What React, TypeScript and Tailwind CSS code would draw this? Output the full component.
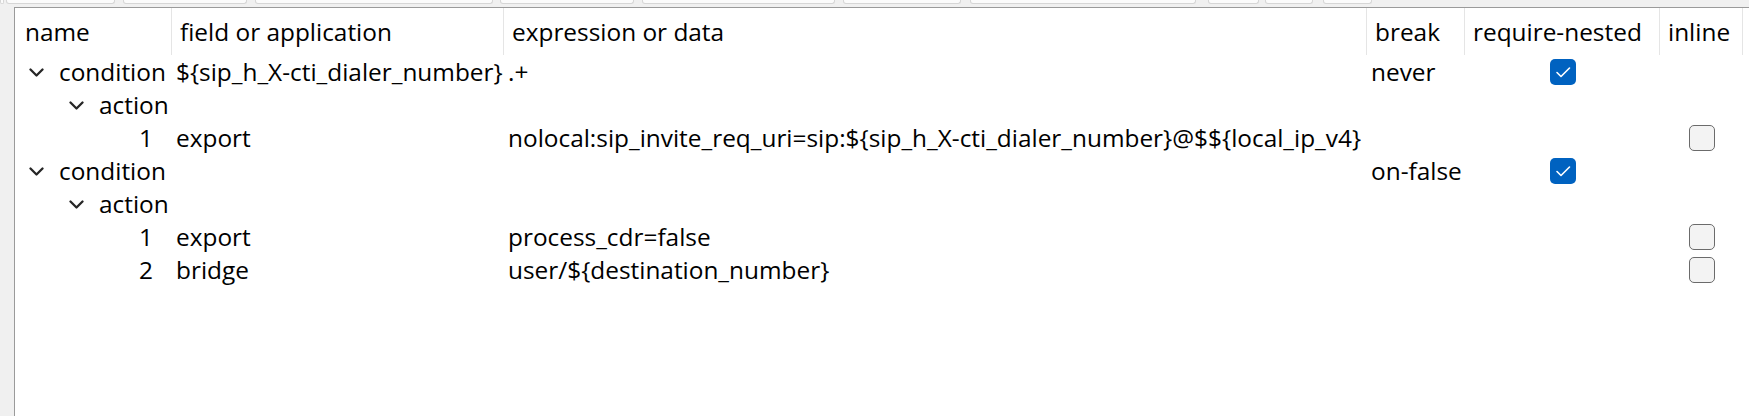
import React from "react";

type Row = {
  level: number;
  expandable: boolean;
  name: string;
  field?: string;
  expr?: string;
  brk?: string;
  nested?: boolean | null;
  inline?: boolean | null;
};

const rows: Row[] = [
  { level: 0, expandable: true, name: "condition", field: "${sip_h_X-cti_dialer_number}", expr: ".+", brk: "never", nested: true, inline: null },
  { level: 1, expandable: true, name: "action" },
  { level: 2, expandable: false, name: "1", field: "export", expr: "nolocal:sip_invite_req_uri=sip:${sip_h_X-cti_dialer_number}@$${local_ip_v4}", inline: false },
  { level: 0, expandable: true, name: "condition", brk: "on-false", nested: true, inline: null },
  { level: 1, expandable: true, name: "action" },
  { level: 2, expandable: false, name: "1", field: "export", expr: "process_cdr=false", inline: false },
  { level: 2, expandable: false, name: "2", field: "bridge", expr: "user/${destination_number}", inline: false },
];

const tabs: [number, number][] = [
  [0, 4],
  [6, 115],
  [123, 247],
  [255, 493],
  [500, 634],
  [642, 835],
  [843, 961],
  [970, 1196],
  [1208, 1259],
  [1265, 1313],
  [1323, 1372],
];

function Chevron() {
  return (
    <svg width="15" height="9" viewBox="0 0 15 9" className="block">
      <polyline points="1.5,1.5 7.5,7.5 13.5,1.5" fill="none" stroke="#262626" strokeWidth="2.3" strokeLinecap="round" strokeLinejoin="round" />
    </svg>
  );
}

function Check({ checked }: { checked: boolean }) {
  if (checked) {
    return (
      <div className="w-[26px] h-[26px] rounded-[5px] bg-[#0062c0] flex items-center justify-center">
        <svg width="26" height="26" viewBox="0 0 26 26" className="block">
          <polyline points="7,13.5 11,17.5 19.5,9" fill="none" stroke="#ffffff" strokeWidth="1.6" strokeLinecap="round" strokeLinejoin="round" />
        </svg>
      </div>
    );
  }
  return <div className="w-[26px] h-[26px] rounded-[5px] bg-[#f3f3f3] border-[1.5px] border-[#6b6b6b]" />;
}

const grid = "grid grid-cols-[157px_332px_863px_98px_195px_83px]";

export default function App() {
  return (
    <div className="w-[1749px] h-[416px] bg-[#f0f0f0] flex flex-col overflow-hidden font-['Open_Sans',sans-serif] text-black">
      <div className="h-[7px] flex-none flex items-start">
        {tabs.map(([a, b], i) => (
          <div key={i} className="h-[4px] flex-none flex items-start" style={{ width: (i === 0 ? b - a : b - tabs[i - 1][1]) }}>
            {i > 0 && <div className="h-full flex-none" style={{ width: a - tabs[i - 1][1] }} />}
            <div className="h-[4px] flex-1 bg-[#fbfbfb] border-b border-x border-[#d6d6d6] rounded-b-[3px]" />
          </div>
        ))}
      </div>
      <div className="flex-1 flex pl-[14px]">
        <div className="flex-1 bg-white border-l border-t border-[#9a9a9a] flex flex-col">
          <div className={grid + " h-[47px] text-[24.4px]"}>
            {["name", "field or application", "expression or data", "break", "require-nested", "inline"].map((h, i) => (
              <div key={h} className={"border-r border-[#e5e5e5] flex items-center whitespace-nowrap pt-[1px] " + (i === 0 ? "pl-[10px]" : "pl-[8px]")}>
                {h}
              </div>
            ))}
          </div>
          {rows.map((r, idx) => (
            <div key={idx} className={grid + " h-[33px] text-[24.4px] leading-[34px]"}>
              <div className="flex items-center whitespace-nowrap" style={{ paddingLeft: r.level * 40 }}>
                <div className="w-[44px] h-full flex-none flex items-center pl-[14px]">
                  {r.expandable && <Chevron />}
                </div>
                <span>{r.name}</span>
              </div>
              <div className="pl-[4px] whitespace-nowrap">{r.field ?? ""}</div>
              <div className="pl-[4px] whitespace-nowrap">{r.expr ?? ""}</div>
              <div className="pl-[4px] whitespace-nowrap">{r.brk ?? ""}</div>
              <div className="flex items-center justify-center">
                {r.nested === true && <Check checked={true} />}
                {r.nested === false && <Check checked={false} />}
              </div>
              <div className="flex items-center justify-center">
                {r.inline === true && <Check checked={true} />}
                {r.inline === false && <Check checked={false} />}
              </div>
            </div>
          ))}
        </div>
      </div>
    </div>
  );
}
